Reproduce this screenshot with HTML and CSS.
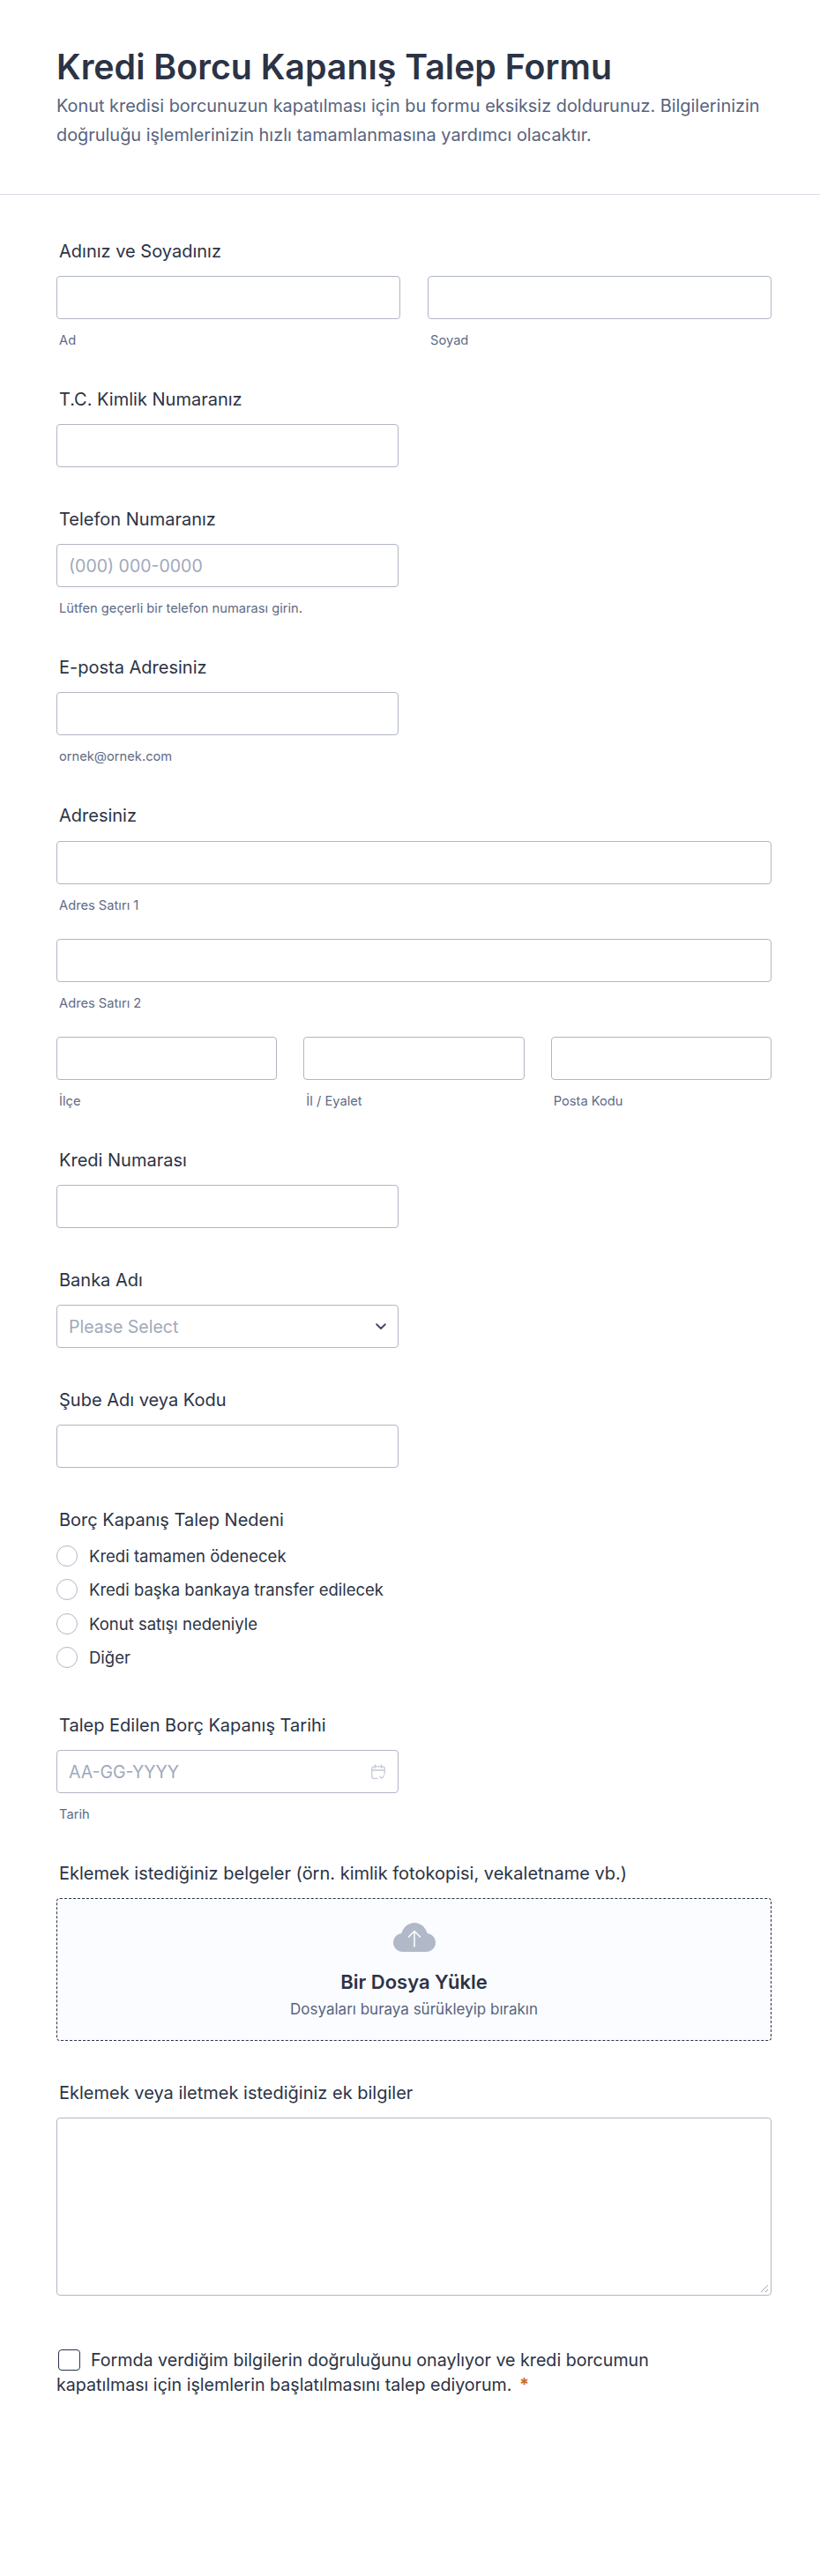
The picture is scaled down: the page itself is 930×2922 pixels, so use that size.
FILE: index.html
```html
<!DOCTYPE html>
<html lang="tr">
<head>
    <meta charset="UTF-8">
    <meta name="viewport" content="width=device-width, initial-scale=1.0">
    <title>Kredi Borcu Kapanış Talep Formu</title>
    <link rel="stylesheet" href="styles.css">
</head>
<body>
    <header class="form-header">
        <h1>Kredi Borcu Kapanış Talep Formu</h1>
        <p>Konut kredisi borcunuzun kapatılması için bu formu eksiksiz doldurunuz. Bilgilerinizin doğruluğu işlemlerinizin hızlı tamamlanmasına yardımcı olacaktır.</p>
    </header>
    <form class="form-body">
        <div class="field">
            <label class="field-label">Adınız ve Soyadınız</label>
            <div class="row-two">
                <div>
                    <div class="input"></div>
                    <div class="sublabel">Ad</div>
                </div>
                <div>
                    <div class="input"></div>
                    <div class="sublabel">Soyad</div>
                </div>
            </div>
        </div>
        <div class="field">
            <label class="field-label">T.C. Kimlik Numaranız</label>
            <div class="input half"></div>
        </div>
        <div class="field">
            <label class="field-label">Telefon Numaranız</label>
            <div class="input half"><span class="placeholder">(000) 000-0000</span></div>
            <div class="sublabel">Lütfen geçerli bir telefon numarası girin.</div>
        </div>
        <div class="field">
            <label class="field-label">E-posta Adresiniz</label>
            <div class="input half"></div>
            <div class="sublabel">ornek@ornek.com</div>
        </div>
        <div class="field">
            <label class="field-label address-label">Adresiniz</label>
            <div class="input"></div>
            <div class="sublabel address-gap">Adres Satırı 1</div>
            <div class="input"></div>
            <div class="sublabel address-gap">Adres Satırı 2</div>
            <div class="row-three">
                <div>
                    <div class="input"></div>
                    <div class="sublabel">İlçe</div>
                </div>
                <div>
                    <div class="input"></div>
                    <div class="sublabel">İl / Eyalet</div>
                </div>
                <div>
                    <div class="input"></div>
                    <div class="sublabel">Posta Kodu</div>
                </div>
            </div>
        </div>
        <div class="field">
            <label class="field-label">Kredi Numarası</label>
            <div class="input half"></div>
        </div>
        <div class="field">
            <label class="field-label">Banka Adı</label>
            <div class="input half">
                <span class="placeholder">Please Select</span>
                <svg class="chevron" width="12" height="8" viewBox="0 0 12 8"><path d="M1.2 1.200 6 6l4.800-4.800" fill="none" stroke="#434e68" stroke-width="2" stroke-linecap="round" stroke-linejoin="round"/></svg>
            </div>
        </div>
        <div class="field">
            <label class="field-label">Şube Adı veya Kodu</label>
            <div class="input half"></div>
        </div>
        <div class="field radios">
            <label class="field-label">Borç Kapanış Talep Nedeni</label>
            <div class="radio"><span class="radio-dot"></span>Kredi tamamen ödenecek</div>
            <div class="radio"><span class="radio-dot"></span>Kredi başka bankaya transfer edilecek</div>
            <div class="radio"><span class="radio-dot"></span>Konut satışı nedeniyle</div>
            <div class="radio"><span class="radio-dot"></span>Diğer</div>
        </div>
        <div class="field">
            <label class="field-label">Talep Edilen Borç Kapanış Tarihi</label>
            <div class="input half">
                <span class="placeholder">AA-GG-YYYY</span>
                <svg class="calendar" width="16" height="18" viewBox="0 0 16 18" fill="none" stroke="#c3c9d6" stroke-width="1.300" stroke-linecap="round" stroke-linejoin="round">
                    <path d="M7 16.400H3a2.200 2.200 0 0 1-2.200-2.200V5A2.200 2.200 0 0 1 3 2.800h10A2.200 2.200 0 0 1 15.200 5v6"/>
                    <path d="M.8 7h14.400M4.500 1v3.500M11.500 1v3.500"/>
                    <path d="m10 14.500 1.600 1.600 3-3"/>
                </svg>
            </div>
            <div class="sublabel">Tarih</div>
        </div>
        <div class="field">
            <label class="field-label">Eklemek istediğiniz belgeler (örn. kimlik fotokopisi, vekaletname vb.)</label>
            <div class="upload">
                <svg class="cloud" width="48" height="33" viewBox="0 0 48 33">
                    <path d="M11 33C5 33 0 28.400 0 22.500 0 17 4 12.800 9.300 12 11.500 4.900 17.200 0 24 0s12.500 4.900 14.700 12C44 12.800 48 17 48 22.500 48 28.400 43 33 37 33Z" fill="#b1b9c9"/>
                    <path d="M24 27V10M17.500 16 24 9.500l6.500 6.500" fill="none" stroke="#fff" stroke-width="1.500" stroke-linecap="round" stroke-linejoin="round"/>
                </svg>
                <div class="upload-title">Bir Dosya Yükle</div>
                <div class="upload-sub">Dosyaları buraya sürükleyip bırakın</div>
            </div>
        </div>
        <div class="field">
            <label class="field-label">Eklemek veya iletmek istediğiniz ek bilgiler</label>
            <div class="textarea">
                <svg class="resize" width="10" height="10" viewBox="0 0 10 10"><path d="M1 9 9 1M6 9l3-3" stroke="#9aa3b5" stroke-width="1" fill="none"/></svg>
            </div>
        </div>
        <div class="consent">
            <span class="checkbox"></span>Formda verdiğim bilgilerin doğruluğunu onaylıyor ve kredi borcumun<br>kapatılması için işlemlerin başlatılmasını talep ediyorum. <span class="required">*</span>
        </div>
    </form>
</body>
</html>
```

FILE: styles.css
```css
html {
    background: #fff;
}
body {
    margin: 0;
    min-height: 2922px;
    background: #fff;
    font-family: "Inter", sans-serif;
    color: #2c3345;
}
.form-header {
    padding: 52px 64px 0;
    height: 168px;
    border-bottom: 1px solid #d8dde6;
}
.form-header h1 {
    margin: 0;
    font-size: 39.300px;
    line-height: 48px;
    font-weight: 600;
}
.form-header p {
    margin: 4px 0 0;
    font-size: 19.900px;
    line-height: 33px;
    color: #57647e;
}
.form-body {
    padding: 52px 55px 0 64px;
}
.field {
    margin-bottom: 47px;
}
.field-label {
    display: block;
    margin: 0 0 18px 3px;
    padding-top: 2px;
    font-size: 20px;
    line-height: 20px;
    font-weight: 400;
}
.address-label {
    margin-bottom: 19px;
}
.input {
    box-sizing: border-box;
    height: 49px;
    padding: 0 13px;
    display: flex;
    align-items: center;
    justify-content: space-between;
    background: #fff;
    border: 1px solid #b1b6c5;
    border-radius: 4px;
}
.half {
    width: 388px;
}
.calendar {
    margin-right: 1px;
}
.placeholder {
    font-size: 19.500px;
    color: #a0a9ba;
}
.sublabel {
    margin: 16px 0 0 3px;
    font-size: 14.700px;
    line-height: 16px;
    color: #5f6b85;
}
.address-gap {
    margin-bottom: 30px;
}
.row-two {
    display: grid;
    grid-template-columns: 1fr 1fr;
    gap: 31px;
}
.row-three {
    display: grid;
    grid-template-columns: 1fr 1fr 1fr;
    gap: 30px;
}
.radios {
    margin-bottom: 53px;
}
.radios .field-label {
    margin-bottom: 19px;
}
.radio {
    display: flex;
    align-items: center;
    height: 24px;
    margin-bottom: 14.400px;
    font-size: 18.500px;
    color: #2c3345;
}
.radio-dot {
    box-sizing: border-box;
    width: 24px;
    height: 24px;
    margin-right: 13px;
    background: #fff;
    border: 1px solid #b1b6c5;
    border-radius: 50%;
}
.upload {
    box-sizing: border-box;
    height: 162px;
    padding-top: 27px;
    text-align: center;
    background: #fbfcff;
    border: 1px dashed #2c3345;
    border-radius: 4px;
}
.cloud {
    display: block;
    margin: 0 auto;
}
.upload-title {
    margin-top: 20px;
    font-size: 22px;
    line-height: 28px;
    font-weight: 600;
}
.upload-sub {
    margin-top: 7px;
    font-size: 17px;
    line-height: 20px;
    color: #57647e;
}
.textarea {
    box-sizing: border-box;
    height: 202px;
    position: relative;
    background: #fff;
    border: 1px solid #b1b6c5;
    border-radius: 4px;
}
.resize {
    position: absolute;
    right: 2px;
    bottom: 2px;
}
.consent {
    margin-top: 59px;
    font-size: 19.650px;
    line-height: 28px;
    color: #2c3345;
}
.checkbox {
    display: inline-block;
    box-sizing: border-box;
    width: 25px;
    height: 24px;
    margin: 0 12px 0 2px;
    vertical-align: -5px;
    border: 1.500px solid #2c3345;
    border-radius: 4px;
}
.required {
    margin-left: 3px;
    font-size: 20px;
    line-height: 0;
    font-weight: 700;
    color: #c96c30;
}
```
